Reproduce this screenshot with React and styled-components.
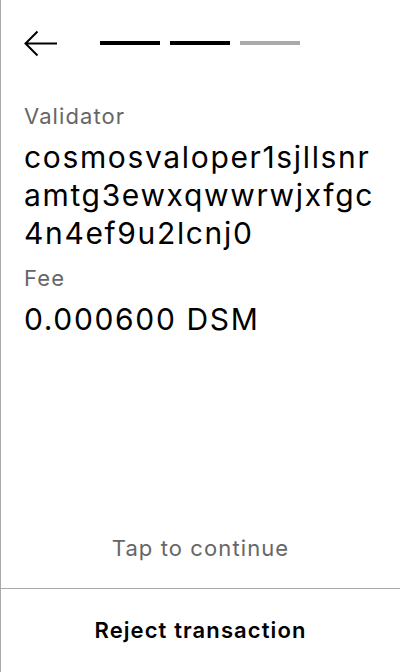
import React from "react";
import styled, { createGlobalStyle } from "styled-components";

const GlobalStyle = createGlobalStyle`
  html, body {
    margin: 0;
    padding: 0;
    background: #fff;
  }
  body {
    font-family: Inter, "Noto Sans", sans-serif;
  }
`;

const steps = [true, true, false];

function App() {
  return (
    <>
      <GlobalStyle />
      <Screen>
        <Header>
          <BackButton aria-label="Back">
            <svg width="34" height="28" viewBox="0 0 34 28" fill="none">
              <path
                d="M33 13.5H2M13.5 1.5L1.5 13.5L13.5 25.5"
                stroke="#000"
                strokeWidth="2"
              />
            </svg>
          </BackButton>
          <Steps>
            {steps.map((done, i) => (
              <Step key={i} done={done} />
            ))}
          </Steps>
        </Header>

        <Content>
          <Label>Validator</Label>
          <Value>cosmosvaloper1sjllsnramtg3ewxqwwrwjxfgc4n4ef9u2lcnj0</Value>
          <Label>Fee</Label>
          <Value>0.000600 DSM</Value>
        </Content>

        <Hint>Tap to continue</Hint>
        <Footer>
          <RejectButton>Reject transaction</RejectButton>
        </Footer>
      </Screen>
    </>
  );
}

export default App;

const Screen = styled.div`
  display: flex;
  flex-direction: column;
  height: 672px;
  box-sizing: border-box;
  border-left: 1px solid #aaaaaa;
`;

const Header = styled.div`
  display: flex;
  align-items: center;
  padding: 30px 0 0 23px;
  height: 28px;
`;

const BackButton = styled.button`
  display: flex;
  padding: 0;
  border: none;
  background: none;
  width: 34px;
  height: 28px;
`;

const Steps = styled.div`
  display: flex;
  gap: 10px;
  margin-left: 42px;
  margin-top: -2px;
`;

const Step = styled.div`
  width: 60px;
  height: 4px;
  background: ${(props) => (props.done ? "#000" : "#aaaaaa")};
`;

const Content = styled.div`
  flex: 1;
  padding: 44px 23px 0;
`;

const Label = styled.div`
  font-size: 22px;
  line-height: 28px;
  letter-spacing: 0.05em;
  color: #666;
  margin-bottom: 8px;
`;

const Value = styled.div`
  font-size: 30px;
  line-height: 38px;
  letter-spacing: 0.055em;
  color: #000;
  word-break: break-all;
  margin-bottom: 12px;
`;

const Hint = styled.div`
  text-align: center;
  font-size: 22px;
  line-height: 28px;
  letter-spacing: 0.05em;
  color: #666;
  padding-bottom: 26px;
`;

const Footer = styled.div`
  border-top: 1px solid #aaaaaa;
  height: 83px;
  display: flex;
  align-items: center;
  justify-content: center;
`;

const RejectButton = styled.button`
  border: none;
  background: none;
  padding: 0 0 2px;
  font-family: Inter, "Noto Sans", sans-serif;
  font-size: 22px;
  font-weight: 600;
  letter-spacing: 0.05em;
  color: #000;
`;
